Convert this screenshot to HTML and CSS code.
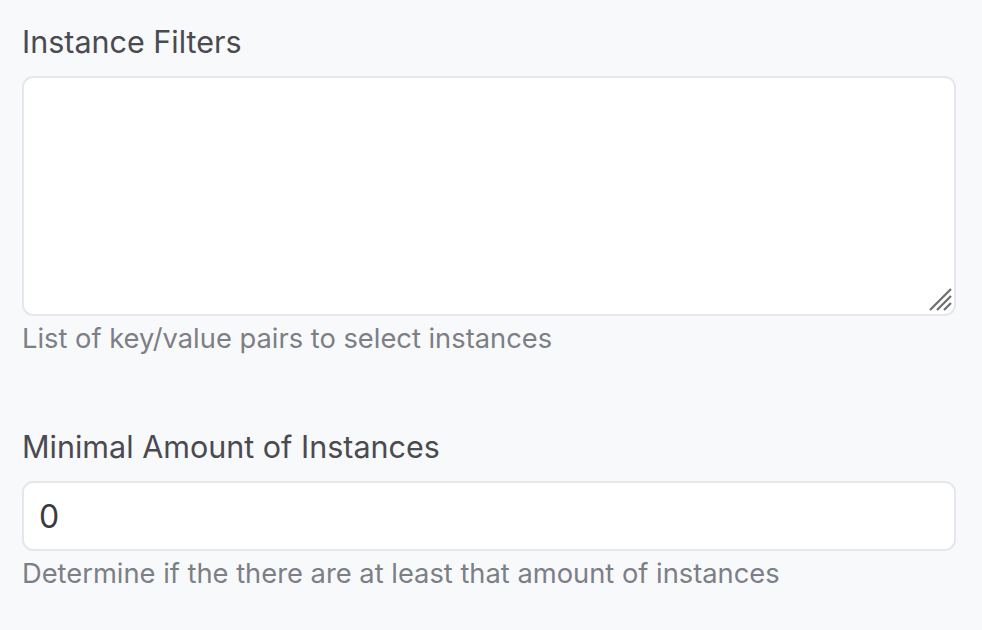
FILE: index.html
```
<!DOCTYPE html>
<html>
<head>
<meta charset="utf-8">
<link rel="stylesheet" href="styles.css">
</head>
<body>
<form class="form">
  <div class="field">
    <label class="label" for="filters">Instance Filters</label>
    <div class="textarea-wrap">
      <textarea id="filters" class="textarea"></textarea>
      <svg class="grip" width="26" height="26" viewBox="0 0 26 26">
        <path d="M3 24 L24 3 M10 24 L24 10 M17 24 L24 17" stroke="#6e6e6e" stroke-width="2.2" fill="none"/>
      </svg>
    </div>
    <p class="help">List of key/value pairs to select instances</p>
  </div>
  <div class="field">
    <label class="label" for="amount">Minimal Amount of Instances</label>
    <input id="amount" class="input" type="text" value="0">
    <p class="help">Determine if the there are at least that amount of instances</p>
  </div>
</form>
</body>
</html>
```
FILE: styles.css
```
html, body {
  margin: 0;
  padding: 0;
  background: #f8f9fb;
}
body {
  font-family: Inter, "Liberation Sans", Arial, sans-serif;
}
.form {
  padding: 24px 26px 0 22px;
  display: flex;
  flex-direction: column;
  gap: 74px;
}
.field {
  display: flex;
  flex-direction: column;
}
.label {
  font-size: 30.5px;
  line-height: 36px;
  color: #4a4a50;
  margin-bottom: 16px;
}
.textarea-wrap {
  position: relative;
}
.textarea {
  display: block;
  box-sizing: border-box;
  width: 100%;
  height: 240px;
  border: 2px solid #e6e7eb;
  border-radius: 11px;
  background: #fff;
  resize: none;
  margin: 0;
}
.grip {
  position: absolute;
  right: 3px;
  bottom: 4px;
}
.input {
  display: block;
  box-sizing: border-box;
  width: 100%;
  height: 70px;
  border: 2px solid #e6e7eb;
  border-radius: 11px;
  background: #fff;
  margin: 0;
  padding: 0 15px;
  font-family: Inter, "Liberation Sans", Arial, sans-serif;
  font-size: 32px;
  color: #3a3a3f;
}
.help {
  margin: 7px 0 0;
  font-size: 27.3px;
  line-height: 32px;
  color: #7c7f86;
}
```
